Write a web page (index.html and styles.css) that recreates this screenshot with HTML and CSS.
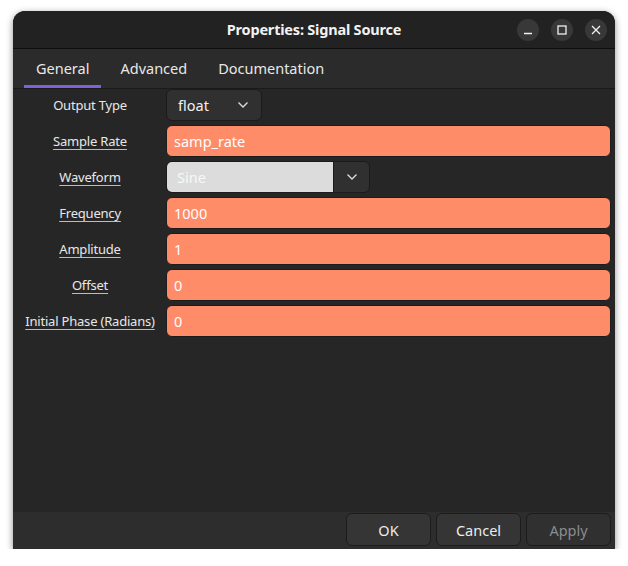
FILE: index.html
```html
<!DOCTYPE html>
<html>
<head>
<meta charset="utf-8">
<link rel="stylesheet" href="styles.css">
</head>
<body>
<div class="window">
  <div class="titlebar">
    <div class="title">Properties: Signal Source</div>
    <div class="wm">
      <span class="wm-btn"><svg width="10" height="10" viewBox="0 0 10 10"><path d="M1 8.5H9" stroke="#f0f0f0" stroke-width="1.4"/></svg></span>
      <span class="wm-btn"><svg width="10" height="10" viewBox="0 0 10 10"><rect x="1" y="1" width="8" height="8" fill="none" stroke="#f0f0f0" stroke-width="1.3"/></svg></span>
      <span class="wm-btn"><svg width="10" height="10" viewBox="0 0 10 10"><path d="M1 1L9 9M9 1L1 9" stroke="#f0f0f0" stroke-width="1.3"/></svg></span>
    </div>
  </div>
  <div class="tabs">
    <div class="tab active">General</div>
    <div class="tab">Advanced</div>
    <div class="tab">Documentation</div>
  </div>
  <div class="content">
    <div class="label">Output Type</div>
    <div class="field"><div class="combo"><span>float</span><svg class="chev" width="12" height="8" viewBox="0 0 12 8"><path d="M1.5 1.5L6 6L10.5 1.5" fill="none" stroke="#dedede" stroke-width="1.3"/></svg></div></div>

    <div class="label u">Sample Rate</div>
    <div class="field"><div class="entry">samp_rate</div></div>

    <div class="label u">Waveform</div>
    <div class="field"><div class="wave"><div class="wave-text">Sine</div><div class="wave-btn"><svg width="12" height="8" viewBox="0 0 12 8"><path d="M1.5 1.5L6 6L10.5 1.5" fill="none" stroke="#dedede" stroke-width="1.3"/></svg></div></div></div>

    <div class="label u">Frequency</div>
    <div class="field"><div class="entry">1000</div></div>

    <div class="label u">Amplitude</div>
    <div class="field"><div class="entry">1</div></div>

    <div class="label u">Offset</div>
    <div class="field"><div class="entry">0</div></div>

    <div class="label u">Initial Phase (Radians)</div>
    <div class="field"><div class="entry">0</div></div>
  </div>
  <div class="buttons">
    <div class="btn">OK</div>
    <div class="btn">Cancel</div>
    <div class="btn disabled">Apply</div>
  </div>
</div>
</body>
</html>
```
FILE: styles.css
```css
html, body {
  margin: 0;
  padding: 0;
  background: #ffffff;
}
body {
  font-family: "Noto Sans", "DejaVu Sans", sans-serif;
  color: #e6e6e6;
}
.window {
  margin: 11px 0 0 13px;
  width: 602px;
  height: 538px;
  border-radius: 12px 12px 0 0;
  background: #262626;
  box-shadow: 0 2px 7px rgba(0,0,0,0.45);
  display: flex;
  flex-direction: column;
  overflow: hidden;
}
.titlebar {
  height: 37px;
  flex: none;
  background: #222222;
  border-bottom: 1px solid #0f0f0f;
  position: relative;
  display: flex;
  align-items: center;
  justify-content: center;
}
.title {
  font-weight: bold;
  font-size: 14.5px;
  color: #f2f2f2;
  letter-spacing: -0.2px;
  margin-top: -1px;
}
.wm {
  position: absolute;
  right: 8px;
  top: 8px;
  display: flex;
  gap: 12px;
}
.wm-btn {
  width: 22px;
  height: 22px;
  border-radius: 50%;
  background: #383838;
  display: flex;
  align-items: center;
  justify-content: center;
}
.tabs {
  height: 39px;
  flex: none;
  background: #2b2b2b;
  border-bottom: 1px solid #1a1a1a;
  display: flex;
  padding-left: 11px;
  gap: 7px;
}
.tab {
  padding: 0 12px;
  font-size: 14.5px;
  color: #e8e8e8;
  height: 36px;
  border-bottom: 3px solid transparent;
  line-height: 39px;
}
.tab.active {
  border-bottom-color: #7c62d6;
}
.content {
  flex: 1;
  display: grid;
  grid-template-columns: 140px 1fr;
  grid-auto-rows: 32px;
  row-gap: 4px;
  column-gap: 6px;
  padding: 0 4px 0 7px;
  align-content: start;
}
.label {
  font-size: 13px;
  display: flex;
  align-items: center;
  justify-content: center;
  color: #e8e8e8;
  white-space: nowrap;
  letter-spacing: -0.2px;
}
.label.u {
  text-decoration: underline;
  text-underline-offset: 3px;
  text-decoration-color: #bdbdbd;
}
.field {
  display: flex;
}
.entry {
  flex: 1;
  background: #ff8c69;
  border: 1px solid #1c1c1c;
  border-radius: 6px;
  color: #ffffff;
  font-size: 14.5px;
  display: flex;
  align-items: center;
  padding-left: 7px;
}
.combo {
  width: 96px;
  box-sizing: border-box;
  background: #303030;
  border: 1px solid #1b1b1b;
  border-radius: 6px;
  display: flex;
  align-items: center;
  justify-content: space-between;
  padding: 0 12px 0 11px;
  font-size: 14.5px;
  color: #f0f0f0;
}
.wave {
  display: flex;
  width: 202px;
  border: 1px solid #1b1b1b;
  border-radius: 6px;
  overflow: hidden;
}
.wave-text {
  flex: 1;
  background: #dcdcdc;
  color: #f7f7f7;
  font-size: 14.5px;
  display: flex;
  align-items: center;
  padding-left: 10px;
}
.wave-btn {
  width: 35px;
  background: #303030;
  border-left: 1px solid #1b1b1b;
  display: flex;
  align-items: center;
  justify-content: center;
}
.buttons {
  height: 37px;
  flex: none;
  background: #2d2d2d;
  display: flex;
  justify-content: flex-end;
  gap: 5px;
  padding: 1px 4px 0 0;
  box-sizing: border-box;
}
.btn {
  width: 85px;
  height: 33px;
  box-sizing: border-box;
  background: #353535;
  border: 1px solid #1c1c1c;
  border-radius: 6px;
  display: flex;
  align-items: center;
  justify-content: center;
  font-size: 14.5px;
  color: #ececec;
}
.btn.disabled {
  color: #8c8c8c;
  background: #303030;
}
```
